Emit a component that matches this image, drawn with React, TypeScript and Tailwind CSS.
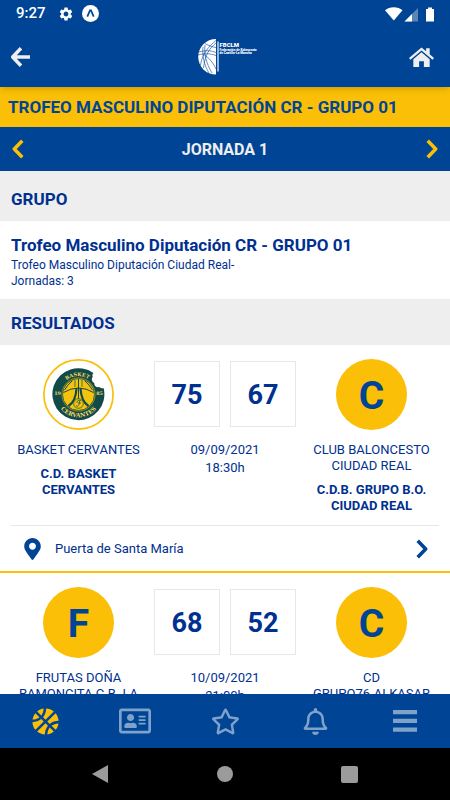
import type { ReactNode } from 'react';
import {
  FaBasketballBall,
  FaMapMarkerAlt,
  FaRegAddressCard,
  FaRegBell,
  FaRegStar,
} from 'react-icons/fa';
import { MdSettings } from 'react-icons/md';

type Team = {
  name: string;
  club: string;
  badge: ReactNode;
};

type Match = {
  home: Team;
  away: Team;
  score: [number, number];
  date: string;
  time: string;
  venue: string;
};

function Chevron({ flip = false }: { flip?: boolean }) {
  return (
    <svg
      viewBox="0 0 12 20"
      className={flip ? 'h-5 w-3 rotate-180' : 'h-5 w-3'}
      fill="none"
      stroke="currentColor"
      strokeWidth="3.5"
      aria-hidden="true"
    >
      <path d="M1.7 1.7 9.7 10l-8 8.3" strokeLinejoin="round" />
    </svg>
  );
}

function InitialBadge({ letter }: { letter: string }) {
  return (
    <div className="flex h-[71px] w-[71px] items-center justify-center rounded-full bg-[#fabf06] pt-1 text-[39px] leading-none font-bold text-[#004595]">
      {letter}
    </div>
  );
}

function CervantesBadge() {
  return (
    <svg viewBox="0 0 71 71" className="h-[71px] w-[71px]" role="img" aria-label="Basket Cervantes">
      <defs>
        <path id="crest-top" d="M17.2 35.3a18.3 18.3 0 0 1 36.6 0" />
        <path id="crest-bottom" d="M12.5 35.3a23 23 0 0 0 46 0" />
      </defs>
      <circle cx="35.5" cy="35.5" r="34.6" fill="#fff" stroke="#fabf06" strokeWidth="1.7" />
      <path
        d="M50.5 14A26 26 0 1 0 60.7 29.2C59.5 29.5 57.5 29.3 56.2 28C53.5 28.7 51 26.8 51.3 24C48.8 22.8 48 19.8 49.8 17.8C49 16.5 49.5 14.8 50.5 14Z"
        fill="#124a47"
      />
      <circle cx="35.5" cy="35.5" r="16" fill="#f3c30f" stroke="#124a47" strokeWidth="0.8" />
      <circle cx="35.5" cy="35.5" r="16.6" fill="none" stroke="#f3c30f" strokeWidth="0.5" />
      <g fill="none" stroke="#124a47" strokeWidth="1">
        <path d="M35.5 20v20" />
        <path d="M20.5 33.5Q35.5 24.5 50.5 33.5" />
        <path d="M29.5 21.5Q24.5 26 21.5 31" />
        <path d="M41.5 21.5Q46.5 26 49.5 31" />
        <path d="M32 21v7M39 21v7" strokeWidth="0.7" />
        <path d="M33.5 29Q33 42 25.5 47" strokeWidth="2.2" />
        <path d="M37.5 29Q38 42 45.5 47" strokeWidth="2.2" />
        <circle cx="35.5" cy="44.5" r="4.8" fill="#f3c30f" strokeWidth="0.7" />
        <path d="M38 41.5c-3-1-5 1-3.5 2.5M33 46.5c2 2 4-1 3.5-5M35 44h3" strokeWidth="0.7" />
      </g>
      <g fill="#f8dc6a" fontFamily="'DejaVu Serif', serif" fontWeight="700">
        <text fontSize="5" textAnchor="middle">
          <textPath href="#crest-top" startOffset="48%">BASKET</textPath>
        </text>
        <text fontSize="5.8" textAnchor="middle">
          <textPath href="#crest-bottom" startOffset="50%">CERVANTES</textPath>
        </text>
        <text x="14.6" y="35.5" fontSize="4.8" textAnchor="middle">19</text>
        <text x="56.6" y="35.5" fontSize="4.8" textAnchor="middle">85</text>
      </g>
    </svg>
  );
}

const matches: Match[] = [
  {
    home: { name: 'BASKET CERVANTES', club: 'C.D. BASKET CERVANTES', badge: <CervantesBadge /> },
    away: {
      name: 'CLUB BALONCESTO CIUDAD REAL',
      club: 'C.D.B. GRUPO B.O.\nCIUDAD REAL',
      badge: <InitialBadge letter="C" />,
    },
    score: [75, 67],
    date: '09/09/2021',
    time: '18:30h',
    venue: 'Puerta de Santa María',
  },
  {
    home: { name: 'FRUTAS DOÑA\nRAMONCITA C.B. LA', club: '', badge: <InitialBadge letter="F" /> },
    away: { name: 'CD\nGRUPO76-ALKASAR', club: '', badge: <InitialBadge letter="C" /> },
    score: [68, 52],
    date: '10/09/2021',
    time: '21:00h',
    venue: '',
  },
];

const tabs = [
  { label: 'Competiciones', icon: <FaBasketballBall size={27} />, active: true },
  { label: 'Ficha', icon: <FaRegAddressCard size={32} /> },
  { label: 'Favoritos', icon: <FaRegStar size={29} /> },
  { label: 'Avisos', icon: <FaRegBell size={27} /> },
  {
    label: 'Menú',
    icon: (
      <svg viewBox="0 0 24 22" className="h-[22px] w-6" fill="currentColor" aria-hidden="true">
        <path d="M0 0h24v4.3H0zM0 8.8h24v4.3H0zM0 17.5h24v4.3H0z" />
      </svg>
    ),
  },
];

function StatusBar() {
  return (
    <div className="flex h-[27px] shrink-0 items-center pr-[15px] pl-4 text-white">
      <span className="text-[15px] leading-none font-medium">9:27</span>
      <MdSettings size={16} className="ml-3" />
      <svg viewBox="0 0 17 17" className="ml-2 h-[17px] w-[17px]" aria-hidden="true">
        <circle cx="8.5" cy="8.5" r="8.5" fill="#fff" />
        <path d="M5.3 11.6 8 5.4h1l2.7 6.2" fill="none" stroke="#004595" strokeWidth="1.7" />
      </svg>
      <svg viewBox="0 0 50 16" className="ml-auto h-4 w-[50px]" fill="#fff" aria-hidden="true">
        <path d="M0 4.2C4.5.2 13 .2 17.5 4.2L8.8 14.5Z" />
        <path d="M33 2v13.5H19.5Z" opacity=".35" />
        <path d="M27 8v7.5h-7.5Z" />
        <path d="M43 1.5h4V3h2v12.5h-8V3h2Z" />
      </svg>
    </div>
  );
}

function Logo() {
  return (
    <svg viewBox="-9 0 68 36" className="h-9 w-[68px] overflow-visible" role="img" aria-label="FBCLM">
      <path d="M19 0a17.8 17.8 0 0 0 0 35.6Z" fill="#fff" />
      <g fill="none" stroke="#004595" strokeWidth="0.6">
        <path d="M8 4.5C12 7 16 8 19 8.5M2 13c7-2 12-1.5 17 .5M1 16c7-2 12-1.5 18 .5M6 8C5 16 7 26 12 34M8 6c-1 9 1 18 7 28" />
        <path d="M19 1.5C12 7 5 15 3.5 26M19 4C13 9 8 15 6.5 29M6 15c5 3 10 8 13 15" />
      </g>
      <path d="M21 2.5v30" stroke="#fff" strokeWidth="1.2" />
      <g fill="#fff" fontFamily="Roboto, sans-serif" fontWeight="900">
        <text x="22.5" y="7.5" fontSize="6">FBCLM</text>
        <text x="22.5" y="11.5" fontSize="3.2">Federación de Baloncesto</text>
        <text x="22.5" y="15.3" fontSize="3.2">de Castilla-La Mancha</text>
      </g>
    </svg>
  );
}

function SectionTitle({ children }: { children: ReactNode }) {
  return (
    <h2 className="bg-[#eee] px-[11px] pt-3 pb-[10px] text-[17px] leading-6 font-bold">{children}</h2>
  );
}

function TeamColumn({ team }: { team: Team }) {
  return (
    <div className="flex w-[135px] shrink-0 flex-col items-center text-center leading-4 whitespace-pre-line">
      {team.badge}
      <p className="mt-3">{team.name}</p>
      {team.club && <p className="mx-3 mt-2 font-bold">{team.club}</p>}
    </div>
  );
}

function MatchCard({ match }: { match: Match }) {
  return (
    <article className="border-b-2 border-[#fabf06] bg-white text-[13px]">
      <div className="mx-[11px] flex justify-between border-b border-gray-200 pt-[14px] pb-[11px]">
        <TeamColumn team={match.home} />
        <div className="pt-[2px] text-center leading-[18px]">
          <div className="mb-[14px] flex gap-[10px]">
            {match.score.map((points, i) => (
              <span
                key={i}
                className="flex h-[66px] w-[66px] items-center justify-center border border-gray-200 pt-[2px] text-[27px] font-bold"
              >
                {points}
              </span>
            ))}
          </div>
          <p>{match.date}</p>
          <p>{match.time}</p>
        </div>
        <TeamColumn team={match.away} />
      </div>
      {match.venue && (
        <a href="#pista" className="flex h-[45px] items-center pr-[22px] pl-6">
          <FaMapMarkerAlt size={22} className="w-[17px] text-[#004595]" />
          <span className="ml-[14px] grow">{match.venue}</span>
          <span className="text-[#004595]">
            <Chevron />
          </span>
        </a>
      )}
    </article>
  );
}

export default function App() {
  return (
    <div className="flex h-screen flex-col bg-white font-[Roboto,sans-serif] text-[#003090]">
      <header className="relative z-10 shrink-0 bg-[#004595] shadow-md">
        <StatusBar />
        <div className="flex h-[60px] items-center justify-between pr-4 pl-[10px] text-[#eee]">
          <button type="button" aria-label="Volver" className="w-[25px]">
            <svg viewBox="0 0 20 20" className="h-5 w-5" fill="none" stroke="currentColor" strokeWidth="3.5" aria-hidden="true">
              <path d="M11 1.3 2.7 10l8.3 8.7M3 10h17" strokeLinejoin="round" />
            </svg>
          </button>
          <Logo />
          <button type="button" aria-label="Inicio" className="w-[25px]">
            <svg viewBox="0 0 26 21" className="h-[21px] w-[25px]" fill="currentColor" aria-hidden="true">
              <path d="M13 0 0 11l1.5 1.8L13 3.2l11.5 9.6L26 11l-4.500-3.800V.8h-3.700v3.300Z" />
              <path d="M13 5 4.500 12.200V20.500h6v-6h5v6h6v-8.300Z" />
            </svg>
          </button>
        </div>
      </header>

      <main className="min-h-0 grow overflow-hidden">
        <h1 className="bg-[#fabf06] px-2 py-2 text-[17px] leading-6 font-bold text-[#004595]">
          TROFEO MASCULINO DIPUTACIÓN CR - GRUPO 01
        </h1>
        <nav className="flex h-11 items-center justify-between bg-[#004595] px-3 text-[#fabf06]">
          <button type="button" aria-label="Jornada anterior">
            <Chevron flip />
          </button>
          <span className="pt-[2px] text-base font-bold text-[#eee]">JORNADA 1</span>
          <button type="button" aria-label="Jornada siguiente">
            <Chevron />
          </button>
        </nav>

        <section className="bg-[#eee] pt-1">
          <SectionTitle>GRUPO</SectionTitle>
          <div className="bg-white px-[11px] pt-3 pb-[10px] text-xs leading-4">
            <h3 className="text-[17px] leading-6 font-bold">Trofeo Masculino Diputación CR - GRUPO 01</h3>
            <p>Trofeo Masculino Diputación Ciudad Real-</p>
            <p>Jornadas: 3</p>
          </div>
        </section>

        <section>
          <SectionTitle>RESULTADOS</SectionTitle>
          {matches.map((match) => (
            <MatchCard key={match.date} match={match} />
          ))}
        </section>
      </main>

      <nav className="flex h-[54px] shrink-0 bg-[#004595]">
        {tabs.map((tab) => (
          <button
            key={tab.label}
            type="button"
            aria-label={tab.label}
            className={`flex flex-1 items-center justify-center ${tab.active ? 'text-[#fabf06]' : 'text-[#7fa2ca]'}`}
          >
            {tab.icon}
          </button>
        ))}
      </nav>

      {/* Android navigation keys */}
      <div className="flex h-[52px] shrink-0 items-center justify-center gap-[108px] bg-black text-[#9b9b9b]">
        <svg viewBox="0 0 17 18" className="h-[18px] w-[17px]" fill="currentColor" aria-hidden="true">
          <path d="M16 0v18L0 9Z" />
        </svg>
        <span className="h-4 w-4 rounded-full bg-current" />
        <span className="h-[17px] w-[17px] rounded-xs bg-current" />
      </div>
    </div>
  );
}
